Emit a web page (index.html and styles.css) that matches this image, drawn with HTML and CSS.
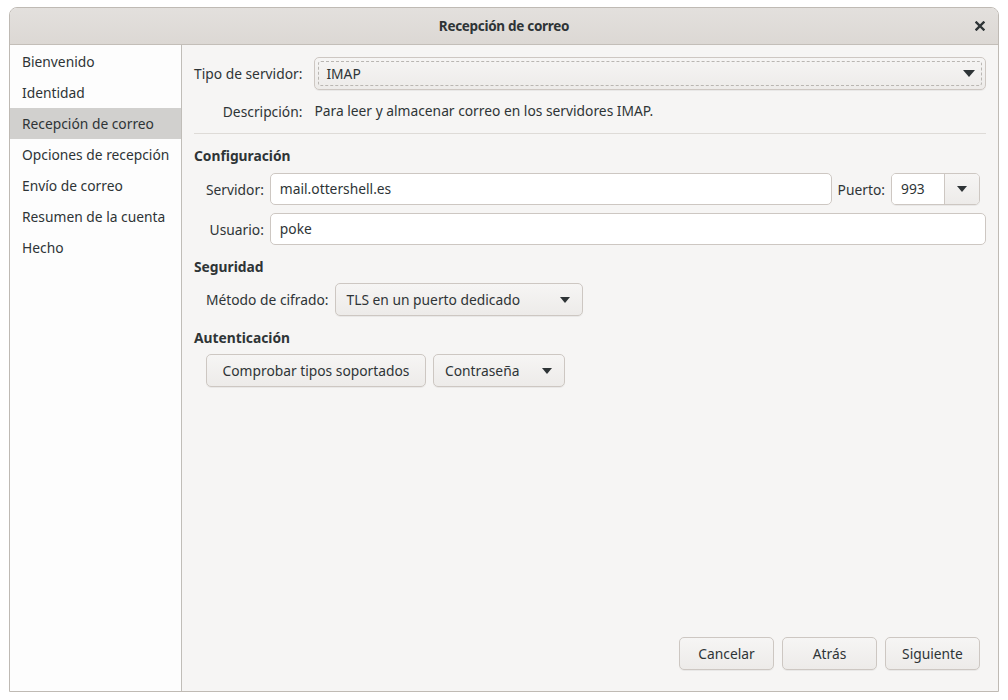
FILE: index.html
```html
<!DOCTYPE html>
<html lang="es">
<head>
<meta charset="utf-8">
<title>Recepción de correo</title>
<link rel="stylesheet" href="styles.css">
</head>
<body>
<div class="window">
  <header class="titlebar">
    <span class="title">Recepción de correo</span>
    <span class="close">
      <svg width="10" height="10" viewBox="0 0 10 10"><path d="M1.5 1.5 L8.5 8.5 M8.5 1.5 L1.5 8.5" stroke="#2e3436" stroke-width="2.4" stroke-linecap="square"/></svg>
    </span>
  </header>
  <div class="body">
    <nav class="sidebar">
      <div class="nav-item">Bienvenido</div>
      <div class="nav-item">Identidad</div>
      <div class="nav-item selected">Recepción de correo</div>
      <div class="nav-item">Opciones de recepción</div>
      <div class="nav-item">Envío de correo</div>
      <div class="nav-item">Resumen de la cuenta</div>
      <div class="nav-item">Hecho</div>
    </nav>
    <main class="main">
      <div class="top-grid">
        <label class="lbl lbl-left">Tipo de servidor:</label>
        <div class="combo combo-focus">
          <span class="combo-text">IMAP</span>
          <svg class="arrow big" width="12" height="7" viewBox="0 0 12 7"><path d="M0 0 H12 L6 7 Z" fill="#2e3436"/></svg>
        </div>
        <label class="lbl">Descripción:</label>
        <div class="desc">Para leer y almacenar correo en los servidores IMAP.</div>
      </div>
      <div class="separator"></div>

      <h3 class="section">Configuración</h3>
      <div class="config-grid">
        <label class="lbl">Servidor:</label>
        <div class="entry">mail.ottershell.es</div>
        <label class="lbl">Puerto:</label>
        <div class="port">
          <div class="port-entry">993</div>
          <div class="port-btn"><svg width="10" height="6" viewBox="0 0 10 6"><path d="M0 0 H10 L5 6 Z" fill="#2e3436"/></svg></div>
        </div>
        <label class="lbl">Usuario:</label>
        <div class="entry span3">poke</div>
      </div>

      <h3 class="section">Seguridad</h3>
      <div class="inline-row">
        <label class="lbl">Método de cifrado:</label>
        <div class="combo combo-cipher">
          <span class="combo-text">TLS en un puerto dedicado</span>
          <svg class="arrow" width="10" height="6" viewBox="0 0 10 6"><path d="M0 0 H10 L5 6 Z" fill="#2e3436"/></svg>
        </div>
      </div>

      <h3 class="section">Autenticación</h3>
      <div class="inline-row">
        <button class="btn btn-check">Comprobar tipos soportados</button>
        <div class="combo combo-auth">
          <span class="combo-text">Contraseña</span>
          <svg class="arrow" width="10" height="6" viewBox="0 0 10 6"><path d="M0 0 H10 L5 6 Z" fill="#2e3436"/></svg>
        </div>
      </div>

      <div class="actions">
        <button class="btn btn-action">Cancelar</button>
        <button class="btn btn-action">Atrás</button>
        <button class="btn btn-action">Siguiente</button>
      </div>
    </main>
  </div>
</div>
</body>
</html>
```

FILE: styles.css
```css
* { box-sizing: border-box; }

html, body {
  margin: 0;
  padding: 0;
  background: #ffffff;
}

body {
  font-family: "Noto Sans", "Open Sans", sans-serif;
  font-size: 13.8px;
  color: #2e3436;
  padding: 7px 9px 0 9px;
}

.window {
  width: 990px;
  height: 685px;
  display: flex;
  flex-direction: column;
  border: 1px solid #bfbab4;
  border-radius: 8px 8px 0 0;
  background: #f6f5f4;
  overflow: hidden;
}

.titlebar {
  height: 37px;
  flex: none;
  display: flex;
  align-items: center;
  justify-content: center;
  position: relative;
  background: linear-gradient(#e3e0dd, #dcd8d4);
  border-bottom: 1px solid #c3beb8;
}

.title {
  font-weight: bold;
  font-size: 13.5px;
  letter-spacing: -0.3px;
  color: #2e3436;
}

.close {
  position: absolute;
  right: 13px;
  top: 13px;
  width: 10px;
  height: 10px;
  display: flex;
}

.body {
  flex: 1;
  display: flex;
  min-height: 0;
}

.sidebar {
  width: 172px;
  flex: none;
  background: #fdfdfd;
  border-right: 1px solid #c0bdb8;
  padding-top: 1px;
}

.nav-item {
  height: 31px;
  line-height: 31px;
  padding-left: 12px;
  white-space: nowrap;
}

.nav-item.selected {
  background: #d1d0ce;
}

.main {
  flex: 1;
  display: flex;
  flex-direction: column;
  padding: 12px 12px 21px 12px;
}

.top-grid {
  display: grid;
  grid-template-columns: auto 1fr;
  column-gap: 12px;
  row-gap: 9px;
  align-items: center;
}

.lbl {
  text-align: right;
  white-space: nowrap;
}

.lbl-left { text-align: left; }

.desc {
  height: 24px;
  line-height: 24px;
}

.combo {
  display: flex;
  align-items: center;
  justify-content: space-between;
  height: 33px;
  padding: 0 12px 0 11px;
  border: 1px solid #cdc7c2;
  border-radius: 5px;
  background: linear-gradient(#f6f5f4, #edebe9);
  box-shadow: 0 1px rgba(0,0,0,0.05);
  white-space: nowrap;
}

.combo-focus {
  position: relative;
  padding-right: 10px;
}

.combo-focus::after {
  content: "";
  position: absolute;
  inset: 3px;
  border: 1px dashed #b9b6b2;
  border-radius: 3px;
  pointer-events: none;
}

.arrow { flex: none; }

.separator {
  height: 1px;
  background: #dedbd7;
  margin-top: 10px;
}

.section {
  margin: 0;
  font-size: 13.8px;
  font-weight: bold;
  height: 20px;
  line-height: 20px;
}

.separator + .section { margin-top: 12px; }

.config-grid {
  display: grid;
  grid-template-columns: auto 1fr auto 95px;
  column-gap: 6px;
  row-gap: 8px;
  align-items: center;
  margin: 7px 0 0 12px;
}

.entry {
  height: 32px;
  line-height: 30px;
  padding: 0 9px;
  border: 1px solid #cdc7c2;
  border-radius: 5px;
  background: #ffffff;
}

.span3 { grid-column: 2 / 5; }

.port {
  display: flex;
  width: 89px;
  height: 32px;
  border: 1px solid #cdc7c2;
  border-radius: 5px;
  overflow: hidden;
  box-shadow: 0 1px rgba(0,0,0,0.05);
}

.port-entry {
  flex: 1;
  background: #ffffff;
  line-height: 30px;
  padding-left: 9px;
  border-right: 1px solid #cdc7c2;
}

.port-btn {
  width: 34px;
  flex: none;
  display: flex;
  align-items: center;
  justify-content: center;
  background: linear-gradient(#f6f5f4, #edebe9);
}

.config-grid + .section { margin-top: 12px; }
.inline-row + .section { margin-top: 12px; }

.inline-row {
  display: flex;
  align-items: center;
  gap: 6px;
  margin: 6px 0 0 12px;
}

.combo-cipher { width: 248px; }
.combo-auth { width: 132px; }

.btn {
  font-family: inherit;
  font-size: 13.8px;
  color: #2e3436;
  height: 33px;
  border: 1px solid #cdc7c2;
  border-radius: 5px;
  background: linear-gradient(#f6f5f4, #edebe9);
  box-shadow: 0 1px rgba(0,0,0,0.05);
  padding: 0 16px;
  white-space: nowrap;
  cursor: default;
}

.btn-check { width: 220px; padding: 0; margin-right: 1px; }

.actions {
  margin-top: auto;
  display: flex;
  justify-content: flex-end;
  gap: 8px;
  padding-right: 6px;
}

.btn-action { width: 95px; padding: 0; }
```
